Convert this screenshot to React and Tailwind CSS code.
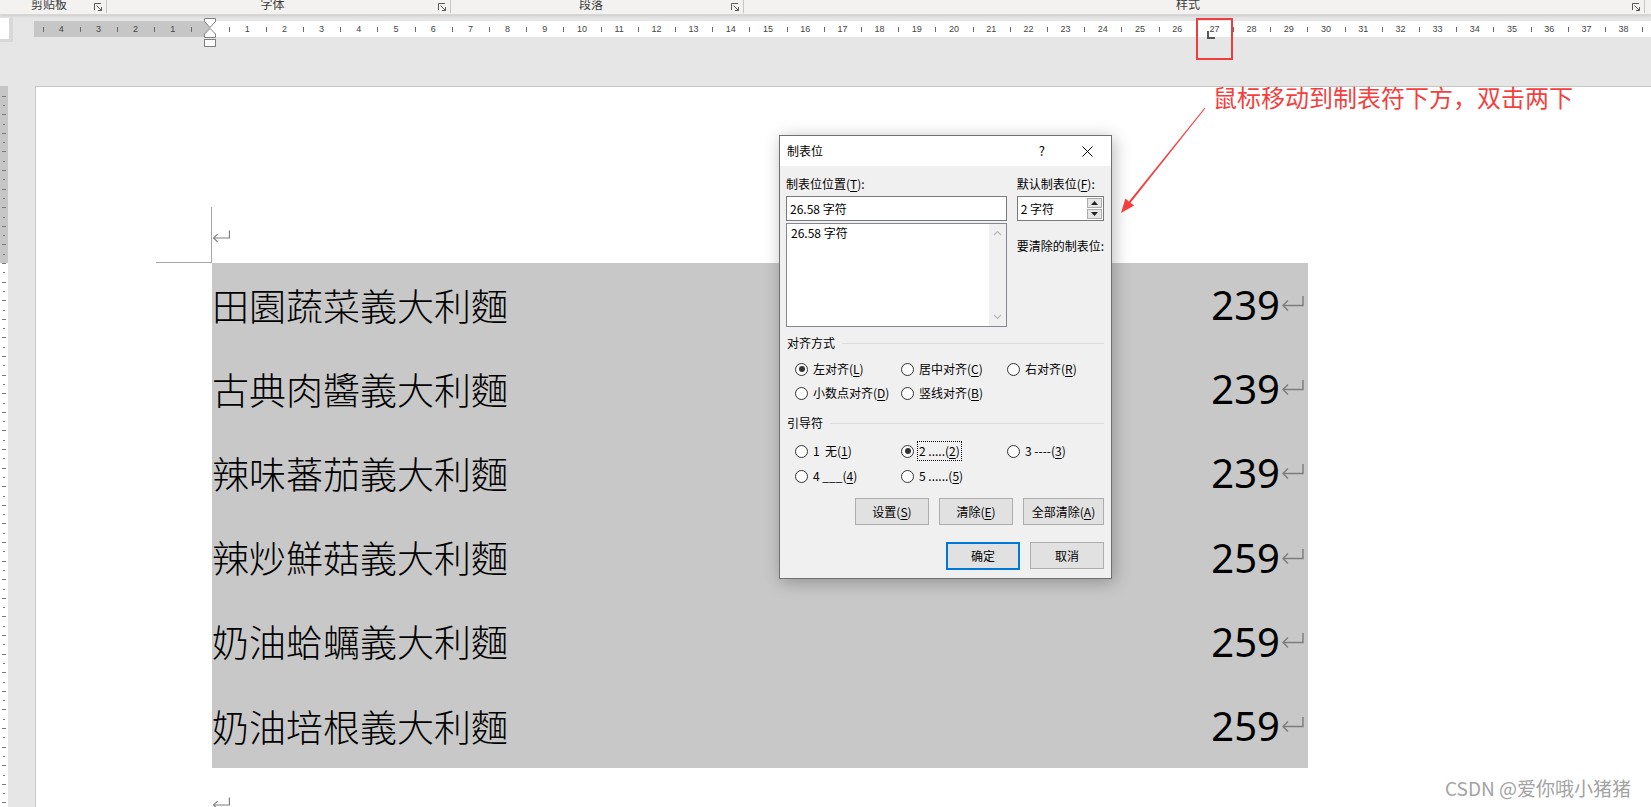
import React from 'react';

const U = 37.2;
const CN = "font-['Noto_Sans_CJK_SC','Noto_Sans',sans-serif]";

const menu = [
  { name: '田園蔬菜義大利麵', price: 239 },
  { name: '古典肉醬義大利麵', price: 239 },
  { name: '辣味蕃茄義大利麵', price: 239 },
  { name: '辣炒鮮菇義大利麵', price: 259 },
  { name: '奶油蛤蠣義大利麵', price: 259 },
  { name: '奶油培根義大利麵', price: 259 },
];

function Launcher() {
  return (
    <svg width="9" height="9" viewBox="0 0 9 9" fill="none" stroke="#5a5a5a" strokeWidth="1" className="shrink-0">
      <path d="M0.5 7V0.5H7" />
      <path d="M2.5 2.5L7.5 7.5M7.5 4V7.5H4" />
    </svg>
  );
}

function Para({ className = '' }) {
  return (
    <svg width="24" height="16" viewBox="0 0 24 16" fill="none" stroke="#7c7c7c" strokeWidth="1.4" className={className}>
      <path d="M22 1V10.5H2" />
      <path d="M7 5.5L2 10.5L7 15.5" />
    </svg>
  );
}

function RibbonGroup({ label, className }) {
  return (
    <div className={`flex items-start h-full ${className}`}>
      <div className="flex-1 text-center overflow-hidden h-full">
        <span className="block -mt-[3px] leading-[14px]">{label}</span>
      </div>
      <div className="pt-[3px] pr-[3px]"><Launcher /></div>
      <div className="w-px h-[13px] bg-[#c8c6c4]" />
    </div>
  );
}

function TopRuler() {
  const nums = [];
  const ticks = [];
  for (let k = -4; k <= 38; k++) {
    if (k !== 0) nums.push(k);
  }
  for (let k = -5; k <= 38; k++) ticks.push(k + 0.5);
  return (
    <div className="relative ml-[34px] h-[16px] flex">
      <div className="w-[176px] h-full bg-[#c6c6c6]" />
      <div className="flex-1 h-full bg-white" />
      {ticks.map((t) => (
        <div key={'t' + t} className="absolute top-[6px] w-px h-[5px] bg-[#6a6a6a]" style={{ left: 176 + t * U }} />
      ))}
      {nums.map((n) => (
        <span
          key={'n' + n}
          className="absolute top-0 -translate-x-1/2 leading-[16px] text-[9px] text-[#444] font-['Liberation_Sans',sans-serif]"
          style={{ left: 176 + n * U }}
        >
          {Math.abs(n)}
        </span>
      ))}
      {/* indent marker */}
      <svg width="12" height="29" viewBox="0 0 12 29" fill="#fff" stroke="#808080" strokeWidth="1" className="absolute left-[170px] -top-[3px]">
        <path d="M0.5 0.5H11.5V3.5L6 9.5L0.5 3.5Z" />
        <path d="M6 10.5L11.5 16V19.5H0.5V16Z" />
        <rect x="0.5" y="21.5" width="11" height="7" />
      </svg>
    </div>
  );
}

function SideRuler() {
  const ticks = [];
  for (let i = -18; i < 60; i++) ticks.push(i);
  return (
    <div className="relative w-[8px] h-full bg-white overflow-hidden">
      <div className="h-[177px] bg-[#c6c6c6]" />
      {ticks.map((i) => (
        <div
          key={i}
          className={`absolute h-px bg-[#777] ${i % 2 === 0 ? 'left-[2px] w-[4px]' : 'left-[3px] w-[2px]'}`}
          style={{ top: 177 + i * (U / 4) }}
        />
      ))}
    </div>
  );
}

function M({ c }) {
  return <span className="underline underline-offset-2">{c}</span>;
}

function Radio({ checked, focus, children }) {
  return (
    <div className="flex items-center h-[24px]">
      <span className="w-[13px] h-[13px] rounded-full border border-[#333] bg-white flex items-center justify-center shrink-0">
        {checked && <span className="w-[6px] h-[6px] rounded-full bg-[#333]" />}
      </span>
      {focus ? (
        <span className="ml-[3px] h-[20px] px-[1px] flex items-center border border-dotted border-black whitespace-nowrap">{children}</span>
      ) : (
        <span className="ml-[5px] whitespace-nowrap">{children}</span>
      )}
    </div>
  );
}

function Btn({ children, w = 'w-[74px]', primary }) {
  return (
    <div
      className={`${w} flex items-center justify-center bg-[#e1e1e1] ${
        primary ? 'h-[28px] border-2 border-[#0078d7]' : 'h-[27px] border border-[#adadad]'
      }`}
    >
      {children}
    </div>
  );
}

function Section({ title }) {
  return (
    <div className="flex items-center h-[16px]">
      <span className="pl-[1px]">{title}</span>
      <div className="flex-1 h-px bg-[#dcdcdc] ml-[7px]" />
    </div>
  );
}

function TabDialog() {
  return (
    <div className={`absolute left-[779px] top-[135px] w-[333px] h-[444px] border border-[#707070] bg-[#f0f0f0] shadow-[2px_3px_16px_rgba(0,0,0,0.28)] text-[12px] text-black ${CN}`}>
      <div className="h-[30px] bg-white flex items-center pl-[7px]">
        <span>制表位</span>
        <span className="ml-auto mr-[37px] text-[13px]">?</span>
        <svg width="11" height="11" viewBox="0 0 11 11" stroke="#000" strokeWidth="1" className="mr-[18px]">
          <path d="M0.5 0.5L10.5 10.5M10.5 0.5L0.5 10.5" />
        </svg>
      </div>

      <div className="pl-[6px] pr-[7px]">
        <div className="flex gap-[10px] pt-[10px]">
          <div className="w-[221px]">
            <div className="h-[16px] leading-[16px]">制表位位置(<M c="T" />):</div>
            <div className="mt-[4px] h-[25px] border border-[#7a7a7a] bg-white flex items-center pl-[3px]">26.58 字符</div>
            <div className="mt-[2px] h-[104px] border border-[#828790] bg-white flex">
              <div className="flex-1 pl-[4px] pt-[1px] leading-[16px]">26.58 字符</div>
              <div className="w-[17px] bg-[#f0f0f0] flex flex-col items-center justify-between py-[6px]">
                <svg width="9" height="6" viewBox="0 0 9 6" fill="none" stroke="#b5b5b5" strokeWidth="1.2"><path d="M1 5L4.5 1.5L8 5" /></svg>
                <svg width="9" height="6" viewBox="0 0 9 6" fill="none" stroke="#b5b5b5" strokeWidth="1.2"><path d="M1 1L4.5 4.5L8 1" /></svg>
              </div>
            </div>
          </div>
          <div className="flex-1">
            <div className="h-[16px] leading-[16px] whitespace-nowrap">默认制表位(<M c="F" />):</div>
            <div className="mt-[4px] h-[25px] border border-[#7a7a7a] bg-white flex items-center pl-[3px]">
              <span className="flex-1">2 字符</span>
              <div className="w-[15px] h-[21px] mr-[1px] flex flex-col gap-px">
                <div className="flex-1 bg-[#e5e5e5] border border-[#adadad] flex items-center justify-center">
                  <svg width="7" height="4" viewBox="0 0 7 4"><path d="M0 4L3.5 0L7 4Z" fill="#222" /></svg>
                </div>
                <div className="flex-1 bg-[#e5e5e5] border border-[#adadad] flex items-center justify-center">
                  <svg width="7" height="4" viewBox="0 0 7 4"><path d="M0 0L3.5 4L7 0Z" fill="#222" /></svg>
                </div>
              </div>
            </div>
            <div className="mt-[17px] h-[16px] leading-[16px] whitespace-nowrap">要清除的制表位:</div>
          </div>
        </div>

        <div className="mt-[8px]"><Section title="对齐方式" /></div>
        <div className="mt-[6px] pl-[9px] grid grid-cols-[106px_106px_106px]">
          <Radio checked>左对齐(<M c="L" />)</Radio>
          <Radio>居中对齐(<M c="C" />)</Radio>
          <Radio>右对齐(<M c="R" />)</Radio>
          <Radio>小数点对齐(<M c="D" />)</Radio>
          <Radio>竖线对齐(<M c="B" />)</Radio>
        </div>

        <div className="mt-[10px]"><Section title="引导符" /></div>
        <div className="mt-[8px] pl-[9px] grid grid-cols-[106px_106px_106px] gap-y-[1px]">
          <Radio>1&nbsp; 无(<M c="1" />)</Radio>
          <Radio checked focus>2 .....(<M c="2" />)</Radio>
          <Radio>3 ----(<M c="3" />)</Radio>
          <Radio>4 ___(<M c="4" />)</Radio>
          <Radio>5 ......(<M c="5" />)</Radio>
        </div>

        <div className="mt-[10px] flex justify-end gap-[10px]">
          <Btn>设置(<M c="S" />)</Btn>
          <Btn>清除(<M c="E" />)</Btn>
          <Btn w="w-[81px]">全部清除(<M c="A" />)</Btn>
        </div>
        <div className="mt-[17px] flex justify-end gap-[10px]">
          <Btn primary>确定</Btn>
          <Btn>取消</Btn>
        </div>
      </div>
    </div>
  );
}

export default function App() {
  return (
    <div className={`relative w-[1651px] h-[807px] overflow-hidden bg-[#e6e6e6] ${CN}`}>
      {/* ribbon group labels */}
      <div className="h-[15px] bg-[#f3f2f1] flex text-[12px] text-[#3b3b3b] border-b border-[#d6d6d6] shadow-[0_1px_3px_rgba(0,0,0,0.12)]">
        <RibbonGroup label="剪贴板" className="w-[107px] pl-[4px]" />
        <RibbonGroup label="字体" className="w-[344px]" />
        <RibbonGroup label="段落" className="w-[293px]" />
        <RibbonGroup label="样式" className="w-[901px]" />
      </div>

      {/* horizontal ruler area */}
      <div className="relative h-[71px] pt-[6px]">
        <div className="absolute left-0 top-[3px] w-[13px] h-[24px] bg-white border-r-[4px] border-b-[3px] border-[#d8d8d8]" />
        <TopRuler />
      </div>

      {/* document area */}
      <div className="flex h-[721px]">
        <SideRuler />
        <div className="w-[27px]" />
        <div className="flex-1 bg-white border-l border-t border-[#c6c6c6] pl-[176px]">
          <div className="relative h-[176px]">
            <div className="absolute -left-[56px] top-[120px] w-[56px] h-[56px] border-r border-b border-[#a6a6a6]" />
            <Para className="absolute left-0 top-[141px] w-[19px]" />
          </div>
          <div className="w-[1096px] bg-[#c8c8c8]">
            {menu.map((m) => (
              <div key={m.name} className="h-[84.2px] flex items-center justify-between pr-[3px]">
                <span className="text-[37px] leading-none font-light font-['Noto_Sans_CJK_TC',serif] text-black">{m.name}</span>
                <span className="flex items-center">
                  <span className="text-[40px] leading-none font-['Noto_Sans',sans-serif] text-black">{m.price}</span>
                  <Para className="ml-[1px] -mt-[4px]" />
                </span>
              </div>
            ))}
          </div>
          <Para className="mt-[27px] w-[19px]" />
        </div>
      </div>

      {/* tab stop marker and highlight box */}
      <svg width="9" height="9" viewBox="0 0 9 9" className="absolute left-[1207px] top-[31px]" fill="none" stroke="#555" strokeWidth="2">
        <path d="M1 0V7H8" />
      </svg>
      <div className="absolute left-[1196px] top-[18px] w-[37px] h-[42px] border-2 border-[#f03c3c]" />

      <TabDialog />

      <div className="absolute left-[1213px] top-[82px] text-[24px] leading-[30px] text-[#f43f3f] whitespace-nowrap">
        鼠标移动到制表符下方，双击两下
      </div>
      <svg className="absolute left-0 top-0 pointer-events-none" width="1651" height="807">
        <polygon
          points="1205.4,108.2 1130.6,202.8 1134.2,205.6 1121,213 1125.4,198.6 1128.9,201.4 1204.6,107.8"
          fill="#f43f3f"
        />
      </svg>

      <div className="absolute left-[1445px] top-[776px] text-[19px] leading-[24px] text-[#a3a3a3] whitespace-nowrap [text-shadow:0_0_1px_#fff]">
        CSDN @爱你哦小猪猪
      </div>
    </div>
  );
}
